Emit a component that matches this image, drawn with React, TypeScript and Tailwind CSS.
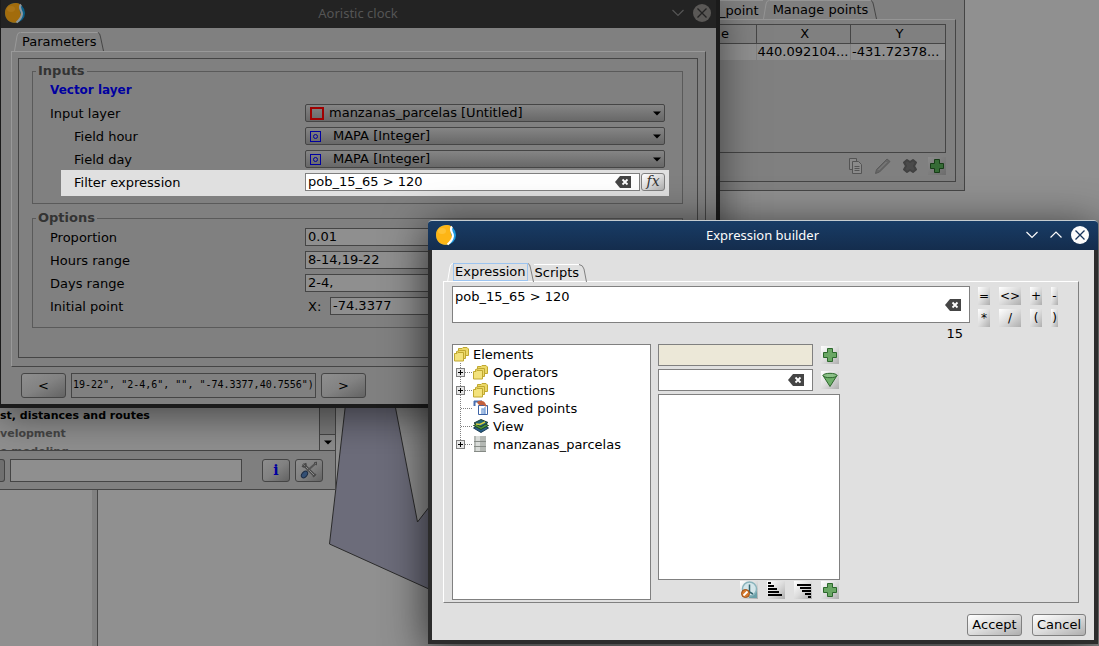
import type { ReactNode } from "react";

const toolButton =
  "flex items-center justify-center bg-linear-to-br from-white via-[#dcdcdc] to-[#aeaeae]";
const dimButton =
  "flex items-center justify-center rounded-[3px] border border-[#454545] bg-linear-to-br from-[#8f8f8f] via-[#828282] to-[#636363]";
const dimField = "border border-[#454545] bg-[#8f8f8f]";
const dimInput = "h-[18px] min-w-0 flex-1 border border-[#454545] bg-[#8f8f8f] pb-px pl-[2px] leading-[15px]";

const Logo = ({ dim = false }: { dim?: boolean }) => (
  <svg width="22" height="22" viewBox="0 0 22 22" aria-hidden="true">
    <circle cx="11" cy="11" r="10" fill={dim ? "#0b6089" : "#1c9be0"} />
    <path
      d="M16.500 2.500 C11 -1 1 2 1 11 C1 19 8 22 14 20.500 C17 17 18 15 16.500 11 C15 8 16 6 16.500 2.500Z"
      fill={dim ? "#a26c0c" : "#fdb515"}
    />
    <path
      d="M17 2.500 C13.500 6.500 18.500 8.500 18 12 C17.500 16 15 18.500 12.500 20.500"
      fill="none"
      stroke={dim ? "#8d98a0" : "#ffffff"}
      strokeWidth="2"
    />
    <ellipse cx="7" cy="7" rx="4" ry="3" fill={dim ? "#b07c20" : "#ffcb4a"} opacity="0.6" />
  </svg>
);

const ChevronIcon = ({ up = false }: { up?: boolean }) => (
  <svg width="12" height="8" viewBox="0 0 12 8" fill="none" stroke="currentColor" strokeWidth="1.200" aria-hidden="true">
    <path d={up ? "M0.500 6.500 L6 1 L11.500 6.500" : "M0.500 1 L6 6.500 L11.500 1"} />
  </svg>
);

const CloseIcon = () => (
  <svg width="18" height="18" viewBox="0 0 18 18" aria-hidden="true">
    <circle cx="9" cy="9" r="9" fill="currentColor" />
    <path d="M4.500 4.500 L13.500 13.500 M13.500 4.500 L4.500 13.500" className="stroke-(--cross)" strokeWidth="1.300" />
  </svg>
);

const ClearIcon = () => (
  <svg width="16" height="12" viewBox="0 0 16 12" aria-hidden="true">
    <path d="M0 6 L5 0 H16 V12 H5Z" fill="#454545" />
    <path d="M7.500 3.500 L12.500 8.500 M12.500 3.500 L7.500 8.500" stroke="#fff" strokeWidth="1.800" />
  </svg>
);

const PlusIcon = ({ dim = false }: { dim?: boolean }) => (
  <svg width="16" height="16" viewBox="0 0 16 16" aria-hidden="true">
    <path
      d="M5.500 1.500 H10.500 V5.500 H14.500 V10.500 H10.500 V14.500 H5.500 V10.500 H1.500 V5.500 H5.500Z"
      fill={dim ? "#356b35" : "#6aa764"}
      stroke={dim ? "#173d17" : "#2c682c"}
      strokeLinejoin="round"
    />
  </svg>
);

const FilterIcon = () => (
  <svg width="16" height="16" viewBox="0 0 16 16" aria-hidden="true">
    <path d="M1 3.500 L8 14.500 L15 3.500Z" fill="#6fb06a" stroke="#2c682c" />
    <ellipse cx="8" cy="3.500" rx="7" ry="2.200" fill="#8cc088" stroke="#2c682c" />
  </svg>
);

const ClockIcon = () => (
  <svg width="18" height="18" viewBox="0 0 18 18" aria-hidden="true">
    <rect x="9" y="9" width="8" height="8" fill="#6aa0a8" />
    <circle cx="9.500" cy="8" r="7" fill="#d4e6ea" stroke="#8ab4bc" strokeWidth="1.500" />
    <path d="M9.500 3.500 V11 L13 13" fill="none" stroke="#34646e" strokeWidth="1.500" />
    <circle cx="5.500" cy="12.500" r="4" fill="#d97a2c" stroke="#99501a" />
    <path d="M3.500 14.500 L7.500 10.500" stroke="#fff" strokeWidth="1.800" />
  </svg>
);

const AscIcon = () => (
  <svg width="18" height="18" viewBox="0 0 18 18" fill="#000" aria-hidden="true">
    <path d="M1 1h3v2H1z M1 4h6v2H1z M1 7h9v2H1z M1 10h11v2H1z M1 13h14v2H1z" />
  </svg>
);

const DescIcon = () => (
  <svg width="18" height="18" viewBox="0 0 18 18" fill="#000" aria-hidden="true">
    <path d="M3 3h14v2H3z M6 6h11v2H6z M8 9h9v2H8z M11 12h6v2h-6z M14 15h3v2h-3z" />
  </svg>
);

const CopyIcon = () => (
  <svg width="16" height="16" viewBox="0 0 16 16" fill="#8a8a8a" stroke="#545454" aria-hidden="true">
    <path d="M1.500 0.500 H8.500 V11.500 H1.500Z" />
    <path d="M4.500 3.500 H10.500 L13.500 6.500 V15.500 H4.500Z" />
    <path d="M6.500 8.500 H11.500 M6.500 10.500 H11.500 M6.500 12.500 H11.500" />
  </svg>
);

const PencilIcon = () => (
  <svg width="16" height="16" viewBox="0 0 16 16" aria-hidden="true">
    <path d="M0.500 15.500 L1.500 11.500 L12 1 L15 3.500 L4.500 14Z" fill="#666" stroke="#5a5a5a" />
    <path d="M3.500 12 L11.500 4" stroke="#858585" />
  </svg>
);

const CrossIcon = () => (
  <svg width="16" height="16" viewBox="0 0 16 16" aria-hidden="true">
    <path
      d="M5 2 L8 4 L11 2 L14 4.500 L12 8 L14 11.500 L11 14 L8 12 L5 14 L2 11.500 L4 8 L2 4.500Z"
      fill="#4a4a4a"
      stroke="#414141"
      strokeWidth="2"
      strokeLinejoin="round"
    />
  </svg>
);

const FolderIcon = () => (
  <svg width="15" height="15" viewBox="0 0 15 15" fill="#ecd868" stroke="#c0a830" aria-hidden="true">
    <path d="M4.500 1.500 H8 L9 0.500 H13 L14.500 2 V8.500 H4.500Z" />
    <path d="M2.500 4.500 L6 3.500 L11.500 3.500 V11.500 H2.500Z" />
    <path d="M0.500 6.500 H3 L4 5.500 H9.500 V14 H0.500Z" fill="#f3e27c" />
  </svg>
);

const PointsIcon = () => (
  <svg width="16" height="16" viewBox="0 0 16 16" aria-hidden="true">
    <path d="M1 1.500 H9 M1.500 1 V6" stroke="#4a70b0" strokeWidth="2" />
    <path d="M5.500 5.500 H14.500 V14.500 H5.500Z" fill="#fff" stroke="#3d63a5" />
    <path d="M9 14 V9 H11 V14 M12 14 V7" stroke="#86a9da" strokeWidth="1.500" fill="none" />
    <path d="M4 2 C8 -0.500 13 1 13.500 7 L10 5 C8 5 7 6 5 4Z" fill="#c4603c" />
  </svg>
);

const LayersIcon = () => (
  <svg width="16" height="14" viewBox="0 0 16 14" aria-hidden="true">
    <path d="M0.500 9 L8 5 L15.500 9 L8 13.500Z" fill="#285c88" stroke="#173a50" />
    <path d="M0.500 6.500 L8 3 L15.500 6.500 L8 10.500Z" fill="#4c9638" stroke="#1d4420" />
    <path d="M1 4 L8 0.500 L15 3.500 L8 8Z" fill="#1e6378" stroke="#223e30" />
    <path d="M3 5 L7 5.500 L12 3" stroke="#d6cc3d" strokeWidth="1.500" fill="none" />
  </svg>
);

const DatabaseIcon = () => (
  <svg width="14" height="16" viewBox="0 0 14 16" aria-hidden="true">
    <rect x="1" y="0" width="12" height="16" fill="#b4b8b4" />
    <rect x="3" y="0" width="4" height="16" fill="#d8dbd8" />
    <path d="M1 5.500h12 M1 10.500h12 M1 15.500h12" stroke="#858a85" />
  </svg>
);

const ToolsIcon = () => (
  <svg width="18" height="18" viewBox="0 0 18 18" fill="none" aria-hidden="true">
    <path d="M3 3 L15 15" stroke="#4a4a4a" strokeWidth="3" />
    <path d="M3.500 3.500 L15 15" stroke="#8c8c8c" />
    <path d="M2 5 C4 7 7 5 5.500 2 M13 16 L16 13" stroke="#4a4a4a" strokeWidth="1.500" />
    <path d="M15.500 2.500 L7 10" stroke="#555" strokeWidth="2" />
    <path d="M14 2 L16.500 1 L16.500 4Z" fill="#888" stroke="#4a4a4a" />
    <ellipse cx="4.500" cy="13.500" rx="3.800" ry="2.500" transform="rotate(-50 4.500 13.500)" fill="#334f74" stroke="#1c2c44" />
  </svg>
);

const DownArrow = () => (
  <svg width="8" height="5" viewBox="0 0 8 5" aria-hidden="true">
    <path d="M0 0.500 H8 L4 4.500Z" fill="#000" />
  </svg>
);

// Slanted swing-style tab
const Tab = ({ children, light, dark, focus = false }: { children: ReactNode; light: string; dark: string; focus?: boolean }) => (
  <button type="button" role="tab" className="flex h-[19px] items-stretch">
    <svg width="6" height="19" viewBox="0 0 6 19" fill="none" stroke={light} aria-hidden="true">
      <path d="M0.500 19 L3 4 Q3.500 0.500 6 0.500" />
    </svg>
    <span
      className={focus ? "h-[18px] border border-[#9cc4f0] px-px leading-4" : "border border-transparent px-px leading-[18px]"}
      style={{ borderTopColor: focus ? undefined : light }}
    >
      {children}
    </span>
    <svg width="6" height="19" viewBox="0 0 6 19" fill="none" stroke={dark} aria-hidden="true">
      <path d="M0 0.500 Q2 1 2.500 5 L5.500 19" />
    </svg>
  </button>
);

const FormRow = ({ id, label, indent = false, children }: { id: string; label: string; indent?: boolean; children: ReactNode }) => (
  <div className="flex h-[18px] items-center">
    <label htmlFor={id} className={indent ? "w-[255px] shrink-0 pl-6 pt-[2px]" : "w-[255px] shrink-0 pt-[2px]"}>
      {label}
    </label>
    {children}
  </div>
);

const LayerSelect = ({ id, value, layer = false }: { id: string; value: string; layer?: boolean }) => (
  <span className="relative flex h-[18px] flex-1">
    <select
      id={id}
      className={
        layer
          ? "w-full appearance-none overflow-hidden rounded-[2px] border border-[#454545] bg-linear-to-b from-[#858585] to-[#686868] pl-[23px] leading-[14px]"
          : "w-full appearance-none overflow-hidden rounded-[2px] border border-[#454545] bg-linear-to-b from-[#858585] to-[#686868] pl-[27px] leading-[14px]"
      }
    >
      <option>{value}</option>
    </select>
    <span className="pointer-events-none absolute inset-y-0 left-[5px] flex items-center">
      {layer ? (
        <svg width="14" height="13" viewBox="0 0 14 13" aria-hidden="true">
          <rect x="1" y="1" width="12" height="11" fill="none" stroke="#a00000" strokeWidth="2" />
        </svg>
      ) : (
        <svg width="11" height="11" viewBox="0 0 11 11" fill="none" stroke="#0000a0" aria-hidden="true">
          <rect x="0.500" y="0.500" width="10" height="10" />
          <circle cx="5.500" cy="5.500" r="2" />
        </svg>
      )}
    </span>
    <span className="pointer-events-none absolute inset-y-0 right-1 flex items-center">
      <DownArrow />
    </span>
  </span>
);

const Workspace = () => (
  <>
    <svg className="absolute left-[320px] top-[400px]" width="120" height="200" viewBox="320 400 120 200" aria-hidden="true">
      <path d="M346 400 L329.500 544 L440 594 V493 L417.500 522 L394 400Z" fill="#6c6c7a" stroke="#2b2b2b" />
    </svg>
    <div className="absolute bottom-0 left-0 top-[489px] flex w-[98px] justify-end border-r border-[#454545]">
      <div className="w-[5px] bg-[#818181]" />
    </div>
  </>
);

const ToolboxWindow = () => (
  <section className="absolute left-0 top-[400px] w-[336px] border-b border-r border-[#454545] bg-[#808080]">
    <div className="flex h-[51px] overflow-hidden border-b border-[#454545] bg-[#8f8f8f]">
      <ul className="h-[50px] flex-1 overflow-hidden pt-[7px] text-[11px] font-bold leading-[18px] text-[#454545]">
        <li className="text-black">st, distances and routes</li>
        <li>velopment</li>
        <li>e modeling</li>
      </ul>
      <div className="flex w-4 flex-col justify-end border-l border-[#454545] bg-[#7a7a7a]">
        <button type="button" aria-label="Scroll down" className="flex h-4 items-center justify-center border-t border-[#454545] bg-[#8b8b8b]">
          <DownArrow />
        </button>
      </div>
    </div>
    <div className="flex h-[38px] items-center pr-3">
      <button type="button" aria-label="Search" className="h-[23px] w-[5px] rounded-r-[3px] border border-l-0 border-[#454545] bg-[#707070]" />
      <input aria-label="Search tools" className={`${dimField} ml-[5px] mr-5 h-[23px] min-w-0 flex-1`} />
      <button type="button" aria-label="Information" className={`${dimButton} mr-[5px] h-[23px] w-7 font-['DejaVu_Serif',serif] text-[14px] font-bold text-[#0000a0]`}>
        i
      </button>
      <button type="button" aria-label="Settings" className={`${dimButton} h-[23px] w-7`}>
        <ToolsIcon />
      </button>
    </div>
  </section>
);

const PointsWindow = () => (
  <section className="absolute left-[719px] top-0 w-[246px] border-b border-r border-[#454545] bg-[#808080] pb-2 pr-2">
    <div className="flex" role="tablist">
      <button type="button" role="tab" className="h-[19px] border-t border-[#959595] pr-1 leading-5">_point</button>
      <Tab light="#959595" dark="#454545">
        <span className="pl-[2px] pr-px">Manage points</span>
      </Tab>
    </div>
    <div className="border-b border-r border-t border-[#454545] border-t-[#959595] pb-[6px] pr-[9px] pt-1">
      <div className="h-[129px] border border-l-0 border-[#454545]">
        <table className="w-full table-fixed border-collapse">
          <thead>
            <tr className="h-[18px] border-b border-[#454545]">
              <th className="w-[37px] border-r border-[#454545] pl-[2px] text-left font-normal leading-4">e</th>
              <th className="border-r border-[#454545] pl-[3px] font-normal leading-4">X</th>
              <th className="pl-[3px] font-normal leading-4">Y</th>
            </tr>
          </thead>
          <tbody>
            <tr className="bg-[#8f8f8f]">
              <td className="border-r border-[#808080] leading-4" />
              <td className="border-r border-[#808080] pl-px leading-4">440.092104...</td>
              <td className="pl-px leading-4">-431.72378...</td>
            </tr>
          </tbody>
        </table>
      </div>
      <div className="mt-1 flex justify-end gap-[9px]">
        <button type="button" aria-label="Copy" className="flex h-[18px] w-[18px] items-center justify-center"><CopyIcon /></button>
        <button type="button" aria-label="Edit" className="flex h-[18px] w-[18px] items-center justify-center"><PencilIcon /></button>
        <button type="button" aria-label="Delete" className="flex h-[18px] w-[18px] items-center justify-center"><CrossIcon /></button>
        <button type="button" aria-label="Add" className="flex h-[18px] w-[18px] items-center justify-center bg-linear-to-br from-[#8c8c8c] to-[#6c6c6c]"><PlusIcon dim /></button>
      </div>
    </div>
  </section>
);

const AoristicWindow = () => (
  <section className="absolute left-0 top-0 w-[720px] border-b-4 border-l border-r-4 border-[#1b1b1b] bg-[#808080] shadow-[0_8px_36px_rgba(0,0,0,0.5)]">
    <header className="flex h-7 items-center bg-[#232323] pb-[2px] pl-[3px] text-[#555]">
      <Logo dim />
      <h2 className="flex-1 pl-[18px] text-center font-['Noto_Sans',sans-serif]">Aoristic clock</h2>
      <button type="button" aria-label="Minimize" className="mr-[9px]"><ChevronIcon /></button>
      <button type="button" aria-label="Close" className="mr-[5px] text-[#5a5856] [--cross:#232323]"><CloseIcon /></button>
    </header>
    <div className="px-[10px] pb-[6px] pt-1">
      <div className="flex pl-[3px]" role="tablist">
        <Tab light="#999999" dark="#454545">Parameters</Tab>
      </div>
      <div className="border border-b-[#454545] border-l-[#999999] border-r-[#454545] border-t-[#999999] pb-2 pl-[6px] pr-[7px] pt-[6px]">
        <div className="border border-[#454545] pb-[29px] pl-[13px] pr-[14px] pt-1">
          <fieldset className="border border-[#5a5a5a] pb-3 pl-[3px] pr-[17px]">
            <legend className="px-[2px] text-[13px] font-bold leading-4 text-[#333333]">Inputs</legend>
            <div className="flex flex-col gap-[5px] pl-[14px] pt-[3px]">
              <h3 className="mb-px h-4 text-[12px] font-bold leading-4 text-[#0000a0]">Vector layer</h3>
              <FormRow id="layer" label="Input layer">
                <LayerSelect id="layer" value="manzanas_parcelas [Untitled]" layer />
              </FormRow>
              <FormRow id="hour" label="Field hour" indent>
                <LayerSelect id="hour" value="MAPA [Integer]" />
              </FormRow>
              <FormRow id="day" label="Field day" indent>
                <LayerSelect id="day" value="MAPA [Integer]" />
              </FormRow>
              <div className="-mb-[5px] -mr-1 -mt-[3px] ml-[11px] flex items-center bg-[#e0e0e0] pb-[5px] pl-[13px] pr-1 pt-[3px]">
                <label htmlFor="filter" className="w-[231px] shrink-0 pt-[2px]">Filter expression</label>
                <span className="flex h-[18px] flex-1 items-center border border-[#808080] bg-white pr-2">
                  <input id="filter" defaultValue="pob_15_65 > 120" className="h-4 min-w-0 flex-1 pl-[2px] leading-4" />
                  <button type="button" aria-label="Clear filter"><ClearIcon /></button>
                </span>
                <button
                  type="button"
                  className={`${toolButton} ml-px h-[18px] w-6 rounded-[3px] border border-[#808080] pb-[2px] font-['DejaVu_Serif',serif] text-[14px] italic leading-4 text-[#333333]`}
                >
                  fx
                </button>
              </div>
            </div>
          </fieldset>
          <fieldset className="mt-[6px] border border-[#5a5a5a] pb-3 pl-[3px] pr-[17px]">
            <legend className="px-[2px] text-[13px] font-bold leading-4 text-[#333333]">Options</legend>
            <div className="flex flex-col gap-[5px] pl-[14px] pt-[2px]">
              <FormRow id="proportion" label="Proportion">
                <input id="proportion" defaultValue="0.01" className={dimInput} />
              </FormRow>
              <FormRow id="hours" label="Hours range">
                <input id="hours" defaultValue="8-14,19-22" className={dimInput} />
              </FormRow>
              <FormRow id="days" label="Days range">
                <input id="days" defaultValue="2-4," className={dimInput} />
              </FormRow>
              <FormRow id="point-x" label="Initial point">
                <span className="w-[25px] pl-[3px] pt-[2px]">X:</span>
                <input id="point-x" defaultValue="-74.3377" className={dimInput} />
              </FormRow>
            </div>
          </fieldset>
        </div>
      </div>
      <div className="flex gap-[5px] pl-[10px] pt-[6px]">
        <button type="button" className={`${dimButton} h-[25px] w-[45px]`}>&lt;</button>
        <input
          aria-label="Command"
          defaultValue={'19-22", "2-4,6", "", "-74.3377,40.7556")'}
          className="h-[25px] w-[245px] border border-[#454545] pb-[2px] pl-px font-['DejaVu_Sans_Mono',monospace] text-[10px]"
        />
        <button type="button" className={`${dimButton} h-[25px] w-[45px]`}>&gt;</button>
      </div>
    </div>
  </section>
);

const treeItems = [
  { label: "Operators", icon: <FolderIcon />, expandable: true },
  { label: "Functions", icon: <FolderIcon />, expandable: true },
  { label: "Saved points", icon: <PointsIcon />, expandable: false },
  { label: "View", icon: <LayersIcon />, expandable: false },
  { label: "manzanas_parcelas", icon: <DatabaseIcon />, expandable: true },
];

const ElementTree = () => (
  <div className="h-[256px] w-[199px] border border-[#808080] bg-white">
    <div className="flex h-[18px] items-center gap-1 pl-px">
      <FolderIcon />
      <span className="pt-[2px]">Elements</span>
    </div>
    <ul>
      {treeItems.map(({ label, icon, expandable }, i) => (
        <li key={label} className="flex h-[18px] items-center">
          <svg width="20" height="18" viewBox="0 0 20 18" fill="none" stroke="#808080" aria-hidden="true">
            <path d={i === treeItems.length - 1 ? "M7.500 0 V9" : "M7.500 0 V18"} strokeDasharray="1 1" />
            <path d="M8 9.500 H19" strokeDasharray="1 1" />
            {expandable && (
              <>
                <rect x="3.500" y="5.500" width="8" height="8" fill="#e6e6e6" />
                <path d="M5 9.500 H10 M7.500 7 V12" stroke="#000" />
              </>
            )}
          </svg>
          <span className="flex w-5 items-center">{icon}</span>
          <span className="pt-[2px]">{label}</span>
        </li>
      ))}
    </ul>
  </div>
);

const operators = ["=", "<>", "+", "-", "*", "/", "(", ")"];

const ExpressionWindow = () => (
  <section className="absolute left-[428px] right-px top-[220px] rounded-t-[4px] bg-[#2c2c2c] pb-1 pl-1 pr-[4px] shadow-[0_8px_44px_rgba(0,0,0,0.7)]">
    <header className="-ml-1 -mr-1 flex h-[30px] items-center rounded-t-[4px] border-t border-[#c4ccd0] bg-linear-to-b from-[#183c66] to-[#142d4d] pb-[2px] pl-[7px] pr-[9px] text-[#fcfcfc]">
      <Logo />
      <h2 className="flex-1 pl-[42px] text-center font-['Noto_Sans',sans-serif]">Expression builder</h2>
      <button type="button" aria-label="Minimize" className="mr-3"><ChevronIcon /></button>
      <button type="button" aria-label="Maximize" className="mr-[9px]"><ChevronIcon up /></button>
      <button type="button" aria-label="Close" className="[--cross:#16335a]"><CloseIcon /></button>
    </header>
    <div className="bg-[#e0e0e0] pb-1 pl-[11px] pr-[15px] pt-[13px]">
      <div className="-mb-px flex pl-1" role="tablist">
        <Tab light="#ffffff" dark="#808080" focus>Expression</Tab>
        <button type="button" role="tab" className="mt-px flex h-[18px]">
          <span className="border-t border-white pl-[1px] leading-4">Scripts</span>
          <svg width="8" height="18" viewBox="0 0 8 18" fill="none" stroke="#808080" aria-hidden="true">
            <path d="M0 0.500 Q4 1 5 5 L7.500 18" />
          </svg>
        </button>
      </div>
      <div className="border border-b-[#808080] border-l-white border-r-[#808080] border-t-white pb-[2px] pl-2 pt-1">
        <div className="flex gap-2 pr-5">
          <div className="flex-1">
            <div className="flex h-[37px] items-center border border-[#808080] bg-white pr-2">
              <textarea
                aria-label="Expression"
                defaultValue="pob_15_65 > 120"
                className="block h-[35px] min-w-0 flex-1 resize-none pl-[2px] pt-[2px] leading-4"
              />
              <button type="button" aria-label="Clear expression"><ClearIcon /></button>
            </div>
            <div className="h-[21px] pr-[7px] pt-[3px] text-right leading-4">15</div>
          </div>
          <div className="grid grid-cols-[12px_22px_12px_7px] content-start gap-x-[9px] gap-y-1 pt-px">
            {operators.map((op) => (
              <button key={op} type="button" className={`${toolButton} h-[18px] text-[12px]`}>
                {op}
              </button>
            ))}
          </div>
        </div>
        <div className="flex gap-[7px]">
          <ElementTree />
          <div className="flex w-[182px] flex-col gap-[3px]">
            <div className="flex items-center gap-2">
              <input aria-label="Selected element" className="h-[22px] min-w-0 flex-1 border border-[#808080] bg-[#ece8d8]" />
              <button type="button" aria-label="Add element" className={`${toolButton} mr-px h-[18px] w-[18px]`}><PlusIcon /></button>
            </div>
            <div className="flex items-center gap-2">
              <span className="flex h-[22px] min-w-0 flex-1 items-center border border-[#808080] bg-white pr-2">
                <input aria-label="Filter elements" className="min-w-0 flex-1" />
                <button type="button" aria-label="Clear"><ClearIcon /></button>
              </span>
              <button type="button" aria-label="Apply filter" className={`${toolButton} mr-px h-[18px] w-[18px]`}><FilterIcon /></button>
            </div>
            <div>
              <div className="h-[186px] border border-[#808080] bg-white" />
              <div className="flex justify-end gap-[9px] pb-px pr-px pt-px">
                <button type="button" aria-label="History" className={`${toolButton} h-[18px] w-[18px]`}><ClockIcon /></button>
                <button type="button" aria-label="Sort ascending" className={`${toolButton} h-[18px] w-[18px]`}><AscIcon /></button>
                <button type="button" aria-label="Sort descending" className={`${toolButton} h-[18px] w-[18px]`}><DescIcon /></button>
                <button type="button" aria-label="Add value" className={`${toolButton} h-[18px] w-[18px]`}><PlusIcon /></button>
              </div>
            </div>
          </div>
        </div>
      </div>
      <div className="-mr-[7px] flex justify-end gap-[10px] pt-[11px]">
        <button type="button" className={`${toolButton} h-[22px] w-[55px] rounded-[3px] border border-[#808080]`}>Accept</button>
        <button type="button" className={`${toolButton} h-[22px] w-[54px] rounded-[3px] border border-[#808080]`}>Cancel</button>
      </div>
    </div>
  </section>
);

export default function App() {
  return (
    <main className="relative min-h-screen w-full overflow-hidden bg-[#909090] font-['DejaVu_Sans',sans-serif] text-[13px] leading-4 text-black">
      <Workspace />
      <ToolboxWindow />
      <PointsWindow />
      <AoristicWindow />
      <ExpressionWindow />
    </main>
  );
}
